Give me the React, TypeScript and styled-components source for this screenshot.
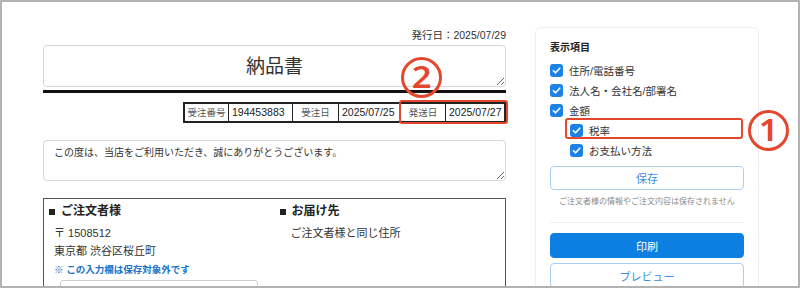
import React from 'react'
import styled, { createGlobalStyle } from 'styled-components'

const GlobalStyle = createGlobalStyle`
  html, body {
    margin: 0;
    padding: 0;
    background: #fff;
  }
  body {
    font-family: "Liberation Sans", "Noto Sans CJK JP", sans-serif;
    color: #333;
  }
`

const RED = '#e4472e'

const Frame = styled.div`
  width: 800px;
  height: 288px;
  box-sizing: border-box;
  border: 2px solid #b3b3b3;
  overflow: hidden;
  display: flex;
  align-items: flex-start;
  padding-left: 41px;
`

const Sheet = styled.div`
  width: 463px;
  flex-shrink: 0;
  padding-top: 26px;
`

const IssueDate = styled.div`
  text-align: right;
  font-size: 10.5px;
  line-height: 14px;
  color: #333;
`

const TitleArea = styled.textarea`
  display: block;
  box-sizing: border-box;
  width: 100%;
  height: 42px;
  margin: 3px 0 0;
  padding: 9px 0 0;
  border: 1px solid #d6d6d6;
  border-radius: 4px;
  text-align: center;
  font-family: "Liberation Sans", "Noto Sans CJK JP", sans-serif;
  font-size: 19px;
  line-height: 23px;
  color: #333;
  outline: none;
  overflow: hidden;
`

const Rule = styled.div`
  height: 3px;
  margin-top: 3px;
  background: #111;
`

const OrderTable = styled.div`
  position: relative;
  display: flex;
  width: max-content;
  margin: 9px 0 0 auto;
  border: 2px solid #222;
`

const Cell = styled.div<{ $w: number; $label?: boolean; $first?: boolean }>`
  box-sizing: border-box;
  width: ${p => p.$w}px;
  height: 17px;
  line-height: 17px;
  border-left: ${p => (p.$first ? 'none' : '1px solid #222')};
  padding-left: ${p => (p.$label ? 0 : 3)}px;
  text-align: ${p => (p.$label ? 'center' : 'left')};
  font-size: ${p => (p.$label ? 9.5 : 10.5)}px;
  color: ${p => (p.$label ? '#555' : '#222')};
  white-space: nowrap;
`

const Callout = styled.div<{ $left: number; $top: number; $w: number; $h: number }>`
  position: absolute;
  left: ${p => p.$left}px;
  top: ${p => p.$top}px;
  width: ${p => p.$w}px;
  height: ${p => p.$h}px;
  box-sizing: border-box;
  border: 2px solid ${RED};
  border-radius: 3px;
  pointer-events: none;
`

const Badge = styled.div<{ $left: number; $top: number }>`
  position: absolute;
  left: ${p => p.$left}px;
  top: ${p => p.$top}px;
  width: 41px;
  height: 41px;
  box-sizing: border-box;
  border: 3px solid ${RED};
  border-radius: 50%;
  display: flex;
  align-items: center;
  justify-content: center;
  color: ${RED};
  font-family: "Noto Sans", "Liberation Sans", sans-serif;
  font-size: 30px;
  font-weight: 600;
  line-height: 1;
  padding-bottom: 1px;
  span {
    display: inline-block;
    transform: scaleX(1.15);
  }
`

const MessageArea = styled.textarea`
  display: block;
  box-sizing: border-box;
  width: 100%;
  height: 41px;
  margin: 17px 0 0;
  padding: 5px 10px 0;
  border: 1px solid #d6d6d6;
  border-radius: 4px;
  font-family: "Liberation Sans", "Noto Sans CJK JP", sans-serif;
  font-size: 10px;
  line-height: 14px;
  color: #333;
  outline: none;
  overflow: hidden;
`

const CustomerBox = styled.div`
  margin-top: 17px;
  height: 110px;
  border: 1px solid #555;
  display: grid;
  grid-template-columns: 1fr 1fr;
`

const Column = styled.div<{ $indent: number }>`
  padding: 4px 0 0 5px;
  & > p {
    margin: 0;
    padding-left: ${p => p.$indent}px;
    font-size: 11px;
    line-height: 18px;
    color: #333;
  }
`

const Heading = styled.h3`
  display: flex;
  align-items: center;
  margin: 0 0 4px;
  font-size: 12px;
  line-height: 17px;
  font-weight: 700;
  color: #222;
  &::before {
    content: "";
    width: 6px;
    height: 6px;
    margin-right: 6px;
    background: #222;
  }
`

const Notice = styled.div`
  margin: 3px 0 0 5px;
  font-size: 9.5px;
  line-height: 14px;
  font-weight: 700;
  color: #1b72c8;
`

const PlainInput = styled.input`
  display: block;
  box-sizing: border-box;
  width: 198px;
  height: 24px;
  margin: 3px 0 0 11px;
  border: 1px solid #cfcfcf;
  border-radius: 3px;
`

const Panel = styled.aside`
  width: 224px;
  flex-shrink: 0;
  box-sizing: border-box;
  margin: 25px 0 0 29px;
  padding: 13px 14px 20px;
  border: 1px solid #efefef;
  border-radius: 6px;
`

const PanelTitle = styled.div`
  font-size: 10px;
  line-height: 14px;
  font-weight: 700;
  color: #222;
  margin-bottom: 5px;
`

const CheckRow = styled.label<{ $nested?: boolean }>`
  position: relative;
  display: flex;
  align-items: center;
  gap: 6px;
  height: 20px;
  margin-left: ${p => (p.$nested ? 20 : 0)}px;
  font-size: 10.5px;
  color: #333;
`

const Box = styled.span`
  width: 13px;
  height: 13px;
  border-radius: 3px;
  background: #1d82e6;
  display: flex;
  align-items: center;
  justify-content: center;
`

const Button = styled.button<{ $primary?: boolean; $h: number; $gap: number }>`
  display: block;
  width: 100%;
  height: ${p => p.$h}px;
  margin-top: ${p => p.$gap}px;
  border-radius: 4px;
  border: 1px solid ${p => (p.$primary ? '#0b80e2' : '#a9cff3')};
  background: ${p => (p.$primary ? '#0b80e2' : '#fff')};
  color: ${p => (p.$primary ? '#fff' : '#3b8ee0')};
  font-family: "Liberation Sans", "Noto Sans CJK JP", sans-serif;
  font-size: 11px;
  padding: 0;
`

const Note = styled.div`
  margin-top: 6px;
  text-align: center;
  font-size: 8px;
  line-height: 12px;
  color: #8a8a8a;
`

const Divider = styled.hr`
  margin: 14px 0 0;
  border: none;
  border-top: 1px solid #efefef;
`

const Check = ({ label, nested, children }: { label: string; nested?: boolean; children?: React.ReactNode }) => (
  <CheckRow $nested={nested}>
    <Box>
      <svg width="9" height="9" viewBox="0 0 10 10">
        <polyline points="1.5,5.2 4,7.6 8.6,2.4" fill="none" stroke="#fff" strokeWidth="1.7" strokeLinecap="round" strokeLinejoin="round" />
      </svg>
    </Box>
    {label}
    {children}
  </CheckRow>
)

const App = () => {
  return (
    <>
      <GlobalStyle />
      <Frame>
        <Sheet>
          <IssueDate>発行日：2025/07/29</IssueDate>
          <TitleArea defaultValue="納品書" />
          <Rule />
          <OrderTable>
            <Cell $w={43} $label $first>受注番号</Cell>
            <Cell $w={64}>194453883</Cell>
            <Cell $w={46} $label>受注日</Cell>
            <Cell $w={62}>2025/07/25</Cell>
            <Cell $w={45} $label>発送日</Cell>
            <Cell $w={59}>2025/07/27</Cell>
            <Callout $left={214} $top={-4} $w={109} $h={24}>
              <Badge $left={0} $top={-45}><span>2</span></Badge>
            </Callout>
          </OrderTable>
          <MessageArea defaultValue="この度は、当店をご利用いただき、誠にありがとうございます。" />
          <CustomerBox>
            <Column $indent={5}>
              <Heading>ご注文者様</Heading>
              <p>〒 1508512</p>
              <p>東京都 渋谷区桜丘町</p>
              <Notice>※ この入力欄は保存対象外です</Notice>
              <PlainInput />
            </Column>
            <Column $indent={11}>
              <Heading>お届け先</Heading>
              <p>ご注文者様と同じ住所</p>
            </Column>
          </CustomerBox>
        </Sheet>
        <Panel>
          <PanelTitle>表示項目</PanelTitle>
          <Check label="住所/電話番号" />
          <Check label="法人名・会社名/部署名" />
          <Check label="金額" />
          <Check label="税率" nested>
            <Callout $left={-5} $top={-2} $w={178} $h={21} />
            <Badge $left={178} $top={-10}><span>1</span></Badge>
          </Check>
          <Check label="お支払い方法" nested />
          <Button $h={24} $gap={6}>保存</Button>
          <Note>ご注文者様の情報やご注文内容は保存されません</Note>
          <Divider />
          <Button $primary $h={25} $gap={10}>印刷</Button>
          <Button $h={25} $gap={5}>プレビュー</Button>
        </Panel>
      </Frame>
    </>
  )
}

export default App
